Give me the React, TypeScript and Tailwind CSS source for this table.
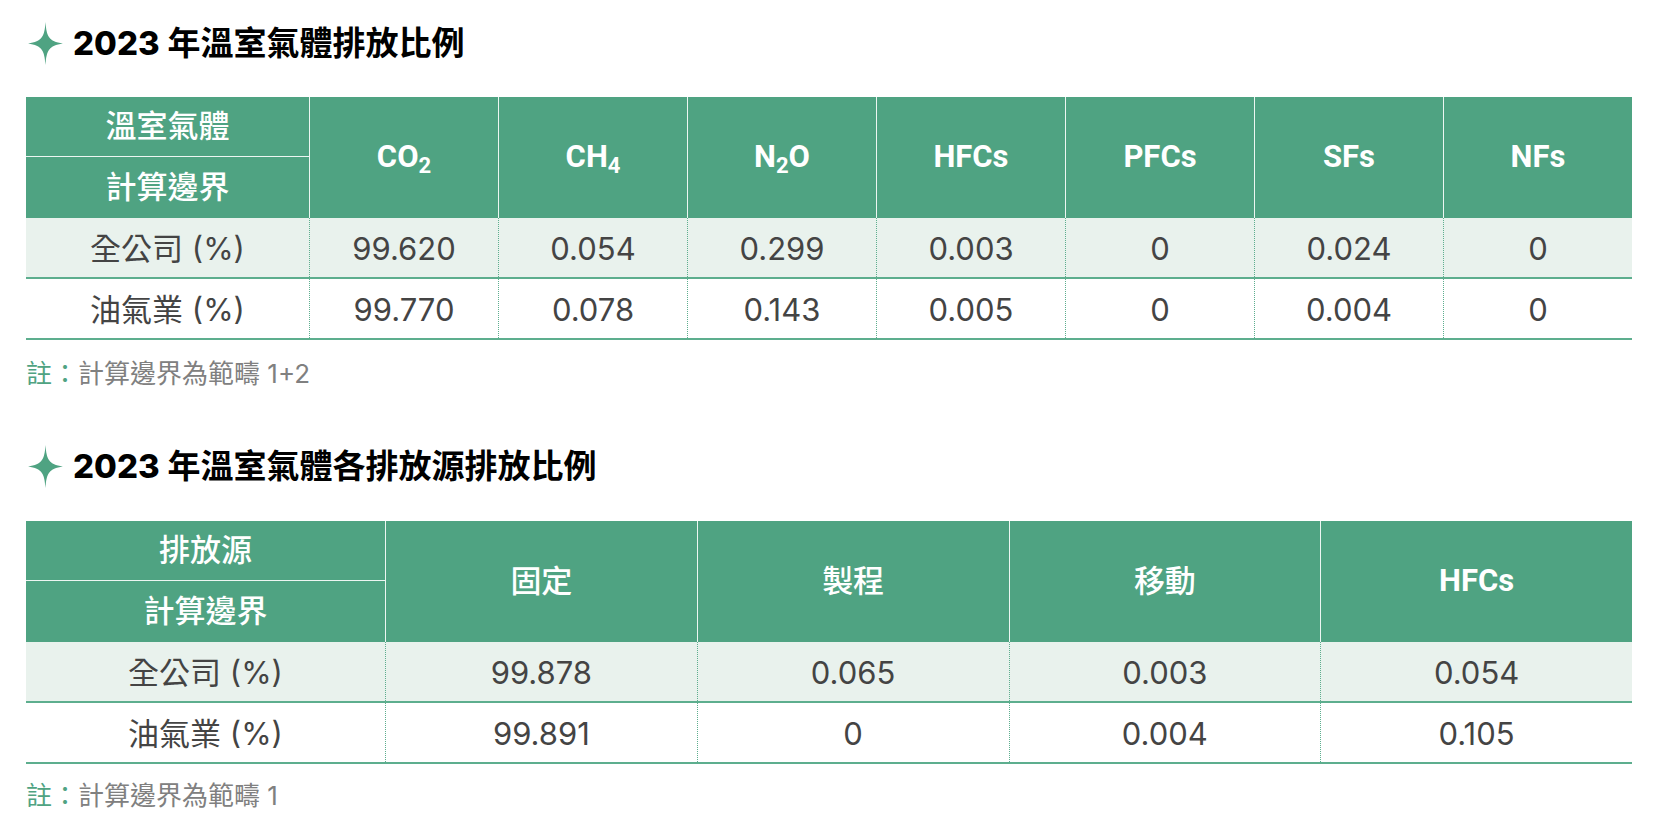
import React from "react";

const GREEN = "bg-[#4fa382]";

const Sparkle = () => (
  <svg width="35" height="43" viewBox="0 0 34 42" className="shrink-0">
    <path
      d="M17 0 C18 14 20 19 34 21 C20 23 18 28 17 42 C16 28 14 23 0 21 C14 19 16 14 17 0 Z"
      fill="#4fa382"
    />
  </svg>
);

const Title = ({ text }: { text: string }) => (
  <div className="flex items-center gap-[10px] pl-[2px] h-[45px]">
    <Sparkle />
    <h2 className="text-[33px] leading-[45px] font-bold text-black">
      <span className="font-['Inter'] font-extrabold">2023</span> {text}
    </h2>
  </div>
);

const Note = ({ text }: { text: string }) => (
  <p className="text-[26px] leading-[36px] text-[#808080]">
    <span className="text-[#4fa382]">註：</span>
    {text}
  </p>
);

type Head = { label: React.ReactNode; latin?: boolean };

const Table = ({
  cols,
  top,
  bottom,
  heads,
  rows,
}: {
  cols: string;
  top: string;
  bottom: string;
  heads: Head[];
  rows: [string, string[]][];
}) => (
  <div className="w-[1606px]">
    {/* header */}
    <div className={`grid ${cols} h-[121px] ${GREEN} text-white`}>
      <div className="flex flex-col">
        <div className="h-[60px] flex items-center justify-center text-[31px] font-medium border-b border-white/90">
          {top}
        </div>
        <div className="flex-1 flex items-center justify-center text-[31px] font-medium">
          {bottom}
        </div>
      </div>
      {heads.map((h, i) => (
        <div
          key={i}
          className={`flex items-center justify-center border-l border-white/90 ${
            h.latin
              ? "font-['Roboto','Noto_Sans_CJK_TC',sans-serif] font-bold text-[31px]"
              : "font-medium text-[31px]"
          }`}
        >
          {h.label}
        </div>
      ))}
    </div>

    {/* body */}
    {rows.map(([name, vals], r) => (
      <div
        key={r}
        className={`grid ${cols} h-[61px] border-b-2 border-[#5dae8e] text-[31px] text-[#444444] ${
          r === 0 ? "bg-[#e9f2ed]" : "bg-white"
        }`}
      >
        <div className="flex items-center justify-center pt-[3px]">{name}</div>
        {vals.map((v, i) => (
          <div
            key={i}
            className="flex items-center justify-center pt-[3px] border-l border-dotted border-[#5dae8e]"
          >
            {v}
          </div>
        ))}
      </div>
    ))}
  </div>
);

const Sub = ({ children }: { children: React.ReactNode }) => (
  <span className="text-[22px] relative top-[6px]">{children}</span>
);

const App = () => {
  return (
    <div className="min-h-screen bg-white pl-[26px] pt-[21px] font-['Inter','Noto_Sans_CJK_TC',sans-serif]">
      <Title text="年溫室氣體排放比例" />
      <div className="mt-[31px]">
        <Table
          cols="grid-cols-[283px_repeat(7,1fr)]"
          top="溫室氣體"
          bottom="計算邊界"
          heads={[
            { label: <span>CO<Sub>2</Sub></span>, latin: true },
            { label: <span>CH<Sub>4</Sub></span>, latin: true },
            { label: <span>N<Sub>2</Sub>O</span>, latin: true },
            { label: "HFCs", latin: true },
            { label: "PFCs", latin: true },
            { label: "SFs", latin: true },
            { label: "NFs", latin: true },
          ]}
          rows={[
            ["全公司 (%)", ["99.620", "0.054", "0.299", "0.003", "0", "0.024", "0"]],
            ["油氣業 (%)", ["99.770", "0.078", "0.143", "0.005", "0", "0.004", "0"]],
          ]}
        />
      </div>
      <div className="mt-[16px]">
        <Note text="計算邊界為範疇 1+2" />
      </div>

      <div className="mt-[52px]">
        <Title text="年溫室氣體各排放源排放比例" />
      </div>
      <div className="mt-[32px]">
        <Table
          cols="grid-cols-[359px_repeat(4,1fr)]"
          top="排放源"
          bottom="計算邊界"
          heads={[
            { label: "固定" },
            { label: "製程" },
            { label: "移動" },
            { label: "HFCs", latin: true },
          ]}
          rows={[
            ["全公司 (%)", ["99.878", "0.065", "0.003", "0.054"]],
            ["油氣業 (%)", ["99.891", "0", "0.004", "0.105"]],
          ]}
        />
      </div>
      <div className="mt-[14px]">
        <Note text="計算邊界為範疇 1" />
      </div>
    </div>
  );
};

export default App;
